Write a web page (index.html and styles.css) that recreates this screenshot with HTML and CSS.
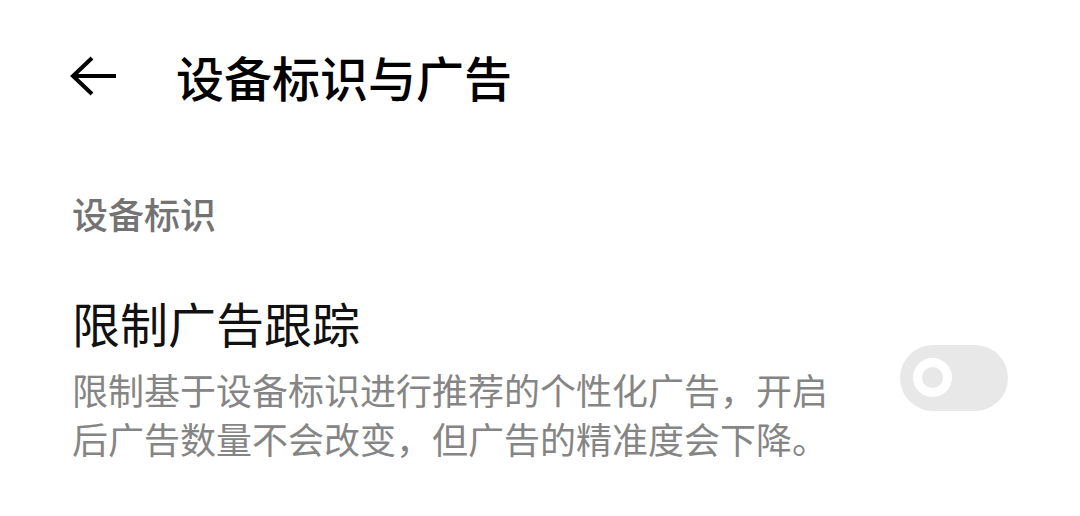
FILE: index.html
```html
<!DOCTYPE html>
<html lang="zh-CN">
<head>
    <meta charset="UTF-8">
    <meta name="viewport" content="width=device-width, initial-scale=1.0">
    <title>设备标识与广告</title>
    <link rel="stylesheet" href="styles.css">
</head>
<body>
    <div id="page">

        <div class="topbar">
            <button class="back-button" aria-label="返回">
                <svg width="48" height="40" viewBox="0 0 48 40">
                    <path d="M46 20 H4 M22 2 L3 20 L22 38" fill="none" stroke="#000" stroke-width="4" stroke-linejoin="miter"/>
                </svg>
            </button>
            <h1 class="title">设备标识与广告</h1>
        </div>

        <div class="section-header">设备标识</div>

        <div class="setting-row">
            <div class="setting-text">
                <div class="setting-title">限制广告跟踪</div>
                <div class="setting-desc">限制基于设备标识进行推荐的个性化广告，开启后广告数量不会改变，但广告的精准度会下降。</div>
            </div>
            <div class="switch" id="adSwitch">
                <span class="knob"></span>
            </div>
        </div>

    </div>

    <script>
        var adSwitch = document.getElementById('adSwitch');
        adSwitch.addEventListener('click', function() {
            adSwitch.classList.toggle('on');
        });
    </script>
</body>
</html>
```

FILE: styles.css
```css
body {
    margin: 0;
    padding: 0;
    background-color: #ffffff;
    font-family: "Noto Sans CJK SC", "Noto Sans", sans-serif;
}

#page {
    padding: 0 72px;
}

.topbar {
    display: flex;
    align-items: center;
    height: 60px;
    margin-top: 46px;
    padding-left: 0;
}

.back-button {
    display: flex;
    margin: 0 0 0 -2px;
    padding: 0;
    border: none;
    background: none;
    cursor: pointer;
}

.title {
    margin: 0 0 0 58px;
    font-size: 48px;
    font-weight: 500;
    line-height: 60px;
    color: #000000;
}

.section-header {
    margin-top: 82px;
    font-size: 36px;
    font-weight: 500;
    line-height: 50px;
    color: #737373;
}

.setting-row {
    display: flex;
    align-items: center;
    justify-content: space-between;
    margin-top: 54px;
}

.setting-title {
    font-size: 48px;
    line-height: 60px;
    color: #111111;
}

.setting-desc {
    max-width: 760px;
    margin-top: 13px;
    font-size: 36px;
    line-height: 49px;
    color: #858585;
}

.switch {
    position: relative;
    flex-shrink: 0;
    width: 108px;
    height: 66px;
    border-radius: 33px;
    background-color: #e8e8e8;
    cursor: pointer;
}

.knob {
    position: absolute;
    top: 13px;
    left: 13px;
    width: 21px;
    height: 21px;
    border: 9px solid #ffffff;
    border-radius: 50%;
    background-color: #e8e8e8;
}

.switch.on {
    background-color: #2f7cf6;
}

.switch.on .knob {
    left: 56px;
    background-color: #2f7cf6;
}
```
